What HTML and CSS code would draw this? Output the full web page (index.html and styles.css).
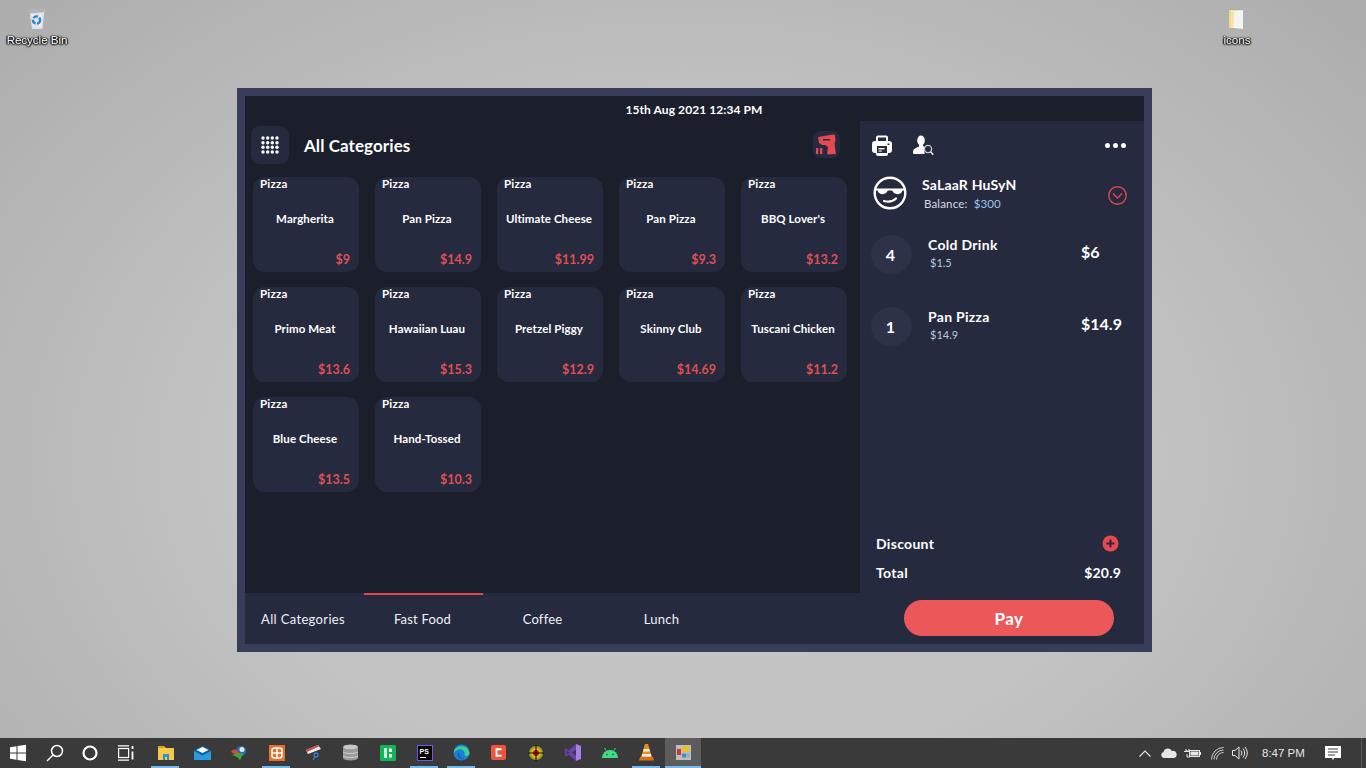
FILE: index.html
```html
<!DOCTYPE html>
<html lang="en">
<head>
<meta charset="utf-8">
<title>POS</title>
<link rel="stylesheet" href="styles.css">
</head>
<body>
<div class="screen">
  <main class="desktop">
    <div class="desk-icon recycle">
      <svg width="24" height="24" viewBox="0 0 24 24"><path d="M4.500 5l15-1.500-2 19.500H7z" fill="#dfe3e6"/><path d="M4.500 5l15-1.500 0 2.500-14.500 1.500z" fill="#aeb4b9"/><path d="M8 8l1 12M16 7.500l-1 13" stroke="#f2f4f5" stroke-width="1.500"/><circle cx="11.500" cy="14" r="3.600" fill="none" stroke="#2b86d8" stroke-width="2.400" stroke-dasharray="5 1.500"/></svg>
      <span>Recycle Bin</span>
    </div>
    <div class="desk-icon folder">
      <svg width="24" height="24" viewBox="0 0 24 24"><path d="M4 4h11v18H4z" fill="#f3d98a"/><path d="M9 5l9-1v19l-9-1z" fill="#f4f4f4"/><path d="M6 4h3v18H6z" fill="#f8e6a8"/></svg>
      <span>icons</span>
    </div>

    <section class="window">
      <header class="datebar">15th Aug 2021 12:34 PM</header>
      <div class="body">
        <div class="catalog">
          <div class="cat-head">
            <button class="grid-btn" aria-label="Menu">
              <svg width="18" height="18" viewBox="0 0 18 18" fill="#fff"><circle cx="2" cy="2" r="1.700"/><circle cx="6.700" cy="2" r="1.700"/><circle cx="11.300" cy="2" r="1.700"/><circle cx="16" cy="2" r="1.700"/><circle cx="2" cy="6.700" r="1.700"/><circle cx="6.700" cy="6.700" r="1.700"/><circle cx="11.300" cy="6.700" r="1.700"/><circle cx="16" cy="6.700" r="1.700"/><circle cx="2" cy="11.300" r="1.700"/><circle cx="6.700" cy="11.300" r="1.700"/><circle cx="11.300" cy="11.300" r="1.700"/><circle cx="16" cy="11.300" r="1.700"/><circle cx="2" cy="16" r="1.700"/><circle cx="6.700" cy="16" r="1.700"/><circle cx="11.300" cy="16" r="1.700"/><circle cx="16" cy="16" r="1.700"/></svg>
            </button>
            <h1 class="cat-title">All Categories</h1>
            <button class="scan-btn" aria-label="Scan">
              <svg width="27" height="27" viewBox="0 0 27 27" fill="#e64a50"><path d="M5 6l15-2.500 2 .5 .5 6-1 1.500 1 9 .5 2.500-8 .5-1-1 1-6-2.500-2.500H9L6 12z"/><path d="M10 8h7v1.500h-7z" fill="#262a3e"/><rect x="3" y="17" width="2.300" height="6"/><rect x="7" y="17" width="2.300" height="6"/></svg>
            </button>
          </div>
          <div class="cards">
            <article class="card"><span class="card-cat">Pizza</span><span class="card-name">Margherita</span><span class="card-price">$9</span></article>
            <article class="card"><span class="card-cat">Pizza</span><span class="card-name">Pan Pizza</span><span class="card-price">$14.9</span></article>
            <article class="card"><span class="card-cat">Pizza</span><span class="card-name">Ultimate Cheese</span><span class="card-price">$11.99</span></article>
            <article class="card"><span class="card-cat">Pizza</span><span class="card-name">Pan Pizza</span><span class="card-price">$9.3</span></article>
            <article class="card"><span class="card-cat">Pizza</span><span class="card-name">BBQ Lover's</span><span class="card-price">$13.2</span></article>
            <article class="card"><span class="card-cat">Pizza</span><span class="card-name">Primo Meat</span><span class="card-price">$13.6</span></article>
            <article class="card"><span class="card-cat">Pizza</span><span class="card-name">Hawaiian Luau</span><span class="card-price">$15.3</span></article>
            <article class="card"><span class="card-cat">Pizza</span><span class="card-name">Pretzel Piggy</span><span class="card-price">$12.9</span></article>
            <article class="card"><span class="card-cat">Pizza</span><span class="card-name">Skinny Club</span><span class="card-price">$14.69</span></article>
            <article class="card"><span class="card-cat">Pizza</span><span class="card-name">Tuscani Chicken</span><span class="card-price">$11.2</span></article>
            <article class="card"><span class="card-cat">Pizza</span><span class="card-name">Blue Cheese</span><span class="card-price">$13.5</span></article>
            <article class="card"><span class="card-cat">Pizza</span><span class="card-name">Hand-Tossed</span><span class="card-price">$10.3</span></article>
          </div>
        </div>

        <aside class="order">
          <div class="order-tools">
            <svg class="tool-print" width="20" height="21" viewBox="0 0 20 21"><path d="M4 2.500a2 2 0 0 1 2-2h8a2 2 0 0 1 2 2V6h-2V2.500H6V6H4z" fill="#fff"/><path d="M3 6h14a3 3 0 0 1 3 3v6a3 3 0 0 1-3 3h-1v1a2 2 0 0 1-2 2H6a2 2 0 0 1-2-2v-1H3a3 3 0 0 1-3-3V9a3 3 0 0 1 3-3z" fill="#fff"/><rect x="5" y="11" width="10" height="7" fill="#262a3e"/><rect x="6.500" y="13" width="6" height="1.400" fill="#fff"/><rect x="6.500" y="15.500" width="3.500" height="1" fill="#fff"/><rect x="15.500" y="8.500" width="2" height="1.500" fill="#262a3e"/></svg>
            <svg class="tool-user" width="21" height="21" viewBox="0 0 21 21"><ellipse cx="8" cy="5.500" rx="3.800" ry="5" fill="#fff"/><path d="M6 9h4v2l2.500 1.500a6 6 0 0 0-.5 6.500H1a1 1 0 0 1-1-1v-1.500c0-2 2-3.500 6-5z" fill="#fff"/><circle cx="15" cy="14" r="3.600" fill="none" stroke="#c9ccd4" stroke-width="1.300"/><path d="M17.500 16.700l2.800 3" stroke="#e6e8ee" stroke-width="1.500"/></svg>
            <span class="dots"><i></i><i></i><i></i></span>
          </div>
          <div class="customer">
            <svg class="face" width="34" height="34" viewBox="0 0 34 34" fill="none"><circle cx="17" cy="17" r="15.300" stroke="#fff" stroke-width="2.400"/><path d="M3 12.500h28v2h-1.500c-1 4-6 4.500-8.500 2.500-1-1-1.500-2-2-2.500h-4c-.5.5-1 1.500-2 2.500-2.500 2-7.500 1.500-8.500-2.500H3z" fill="#fff"/><path d="M11 25c4 1 9 .5 12-2.500" stroke="#fff" stroke-width="2.200" stroke-linecap="round"/></svg>
            <div class="cust-info">
              <div class="cust-name">SaLaaR HuSyN</div>
              <div class="cust-bal">Balance:&nbsp; <span class="bal-val">$300</span></div>
            </div>
            <svg class="chev" width="19" height="19" viewBox="0 0 19 19" fill="none" stroke="#e2474f" stroke-width="1.400"><circle cx="9.500" cy="9.500" r="8.700"/><path d="M5 7.500l4.500 4.500 4.500-4.500"/></svg>
          </div>
          <div class="lines">
            <div class="line">
              <span class="qty">4</span>
              <div class="line-info"><div class="line-name">Cold Drink</div><div class="line-unit">$1.5</div></div>
              <span class="line-total">$6</span>
            </div>
            <div class="line">
              <span class="qty">1</span>
              <div class="line-info"><div class="line-name">Pan Pizza</div><div class="line-unit">$14.9</div></div>
              <span class="line-total">$14.9</span>
            </div>
          </div>
          <div class="summary">
            <div class="sum-row"><span>Discount</span><svg class="sum-plus" width="17" height="17" viewBox="0 0 17 17"><circle cx="8.500" cy="8.500" r="8" fill="#e64a50"/><path d="M8.500 4.500v8M4.500 8.500h8" stroke="#262a3e" stroke-width="2"/></svg></div>
            <div class="sum-row"><span>Total</span><span class="sum-val">$20.9</span></div>
          </div>
        </aside>
      </div>
      <footer class="bottombar">
        <nav class="tabs">
          <a class="tab tab-first">All Categories</a>
          <a class="tab tab-active">Fast Food</a>
          <a class="tab">Coffee</a>
          <a class="tab">Lunch</a>
        </nav>
        <button class="pay">Pay</button>
      </footer>
    </section>
  </main>

  <footer class="taskbar">
    <div class="task-sys">
      <span class="t-sys"><svg width="18" height="18" viewBox="0 0 18 18" fill="#fff"><path d="M1 3.200l6.500-1v6.300H1zM8.500 2l8.500-1.300v7.800H8.500zM1 9.500h6.500v6.300l-6.500-1zM8.500 9.500H17v7.800L8.500 16z"/></svg></span>
      <span class="t-sys t-search"><svg width="18" height="18" viewBox="0 0 18 18" fill="none" stroke="#fff" stroke-width="1.500"><circle cx="11" cy="7" r="5.500"/><path d="M7 11l-6 6"/></svg></span>
      <span class="t-sys"><svg width="16" height="16" viewBox="0 0 16 16" fill="none" stroke="#fff" stroke-width="2.200"><circle cx="8" cy="8" r="6.500"/></svg></span>
      <span class="t-sys"><svg width="16" height="16" viewBox="0 0 16 16" fill="none" stroke="#fff" stroke-width="1.200"><rect x=".6" y="3.500" width="10" height="9"/><path d="M0 .8h11M0 15.200h11"/><path d="M14.500 1v3M14.500 6.500v8" stroke-width="1.800"/></svg></span>
    </div>
    <div class="task-apps">
      <span class="app on"><svg width="18" height="16" viewBox="0 0 18 16"><path d="M1 1h6l2 2h8v12H1z" fill="#f7c948"/><path d="M1 1h6l1 2H1z" fill="#d9a520"/><path d="M6 9h6v6h-2v-3H8v3H6z" fill="#2f8fdc"/></svg></span>
      <span class="app"><svg width="17" height="14" viewBox="0 0 17 14"><path d="M0 5l8.500-5L17 5v9H0z" fill="#2b9be0"/><path d="M0 5l8.500 4.500L17 5l-8.500-5z" fill="#0d5fa8"/><path d="M2.500 4l6-3 6 3-6 3z" fill="#fff"/></svg></span>
      <span class="app"><svg width="18" height="16" viewBox="0 0 18 16"><circle cx="10" cy="6" r="5" fill="#2e6bc0"/><circle cx="11" cy="4.500" r="2.500" fill="#dfe8ef"/><path d="M0 7c2-3 5-3 6-1l3 3-4 1z" fill="#d64a2a"/><path d="M1 10l6-2 5 1-3 6-3-3z" fill="#46a82f"/></svg></span>
      <span class="app on"><svg width="16" height="16" viewBox="0 0 16 16"><rect width="16" height="16" fill="#e8702a"/><rect x="3" y="3" width="10" height="10" rx="2.500" fill="none" stroke="#fff" stroke-width="1.600"/><path d="M3 8h10M8 3v10" stroke="#fff" stroke-width="1.400"/></svg></span>
      <span class="app"><svg width="17" height="17" viewBox="0 0 17 17"><path d="M1 6l12-5 3 4-13 5z" fill="#f1f1f1"/><path d="M1 6l12-5 .8 1.500L2 8z" fill="#d64545"/><circle cx="11" cy="11" r="2" fill="none" stroke="#3b7fd0" stroke-width="1.300"/><path d="M10 13l-2 3" stroke="#3b7fd0" stroke-width="1.300"/></svg></span>
      <span class="app"><svg width="15" height="17" viewBox="0 0 15 17"><path d="M0 3a7.500 2.600 0 0 1 15 0v11a7.500 2.600 0 0 1-15 0z" fill="#9a9a9a"/><ellipse cx="7.500" cy="3" rx="7" ry="2.300" fill="#c8c8c8"/><path d="M0 8c3 2 12 2 15 0M0 12c3 2 12 2 15 0" stroke="#d4d4d4" fill="none"/></svg></span>
      <span class="app"><svg width="16" height="16" viewBox="0 0 16 16"><rect width="16" height="16" rx="1.500" fill="#0fb75a"/><rect x="4" y="3" width="3" height="10" fill="#cdf3dc"/><rect x="9" y="3.500" width="3" height="3.500" fill="#fff"/><rect x="9" y="9" width="3" height="3.500" fill="#fff"/></svg></span>
      <span class="app on"><svg width="16" height="16" viewBox="0 0 16 16"><rect x=".5" y=".5" width="15" height="15" fill="#000" stroke="#6f56f0"/><text x="2.500" y="8.500" class="ps">PS</text><rect x="3" y="12" width="6" height="1" fill="#fff"/></svg></span>
      <span class="app on"><svg width="17" height="17" viewBox="0 0 17 17"><circle cx="8.500" cy="8.500" r="8" fill="#1c7fd6"/><path d="M1 7c2-6 14-7 15.500 2 .3 2.500-3 3.500-5 2.500C13 8 9.500 4.500 5.500 5.500 3.500 6 2 7 1 9z" fill="#3ccf9a"/><path d="M5.500 8c-2 4 2 9 8 6.500C9 16 5.500 13 5.500 8z" fill="#0d4c9a"/></svg></span>
      <span class="app"><svg width="15" height="15" viewBox="0 0 15 15"><rect width="15" height="15" rx="2" fill="#f0533f"/><path d="M10.500 4.200H5.500v6.600h5" fill="none" stroke="#fff" stroke-width="1.900"/></svg></span>
      <span class="app"><svg width="16" height="16" viewBox="0 0 16 16"><circle cx="8" cy="8" r="7" fill="#9aa82b"/><circle cx="8" cy="8" r="5" fill="#e8b31c"/><circle cx="8" cy="8" r="3" fill="#cf1313"/><path d="M8 0v16M0 8h16" stroke="#000" stroke-width=".9"/></svg></span>
      <span class="app"><svg width="16" height="17" viewBox="0 0 16 17"><path d="M11 0l5 2v13l-5 2z" fill="#a77fe6"/><path d="M11 0v17L3.500 10.500 1 12.500 0 12V5l1-.5 2.500 2z" fill="#6a3fb5"/><path d="M1.500 6.500v4L4 8.500zM11 5.500L7 8.500l4 3z" fill="#3c3c3c"/></svg></span>
      <span class="app"><svg width="16" height="11" viewBox="0 0 16 11"><path d="M0 11a8 8 0 0 1 16 0z" fill="#3ddc84"/><path d="M4 3.500L2.500 1M12 3.500L13.500 1" stroke="#3ddc84" stroke-width="1"/><circle cx="5" cy="7.500" r=".8" fill="#3a3a3a"/><circle cx="11" cy="7.500" r=".8" fill="#3a3a3a"/></svg></span>
      <span class="app on"><svg width="15" height="17" viewBox="0 0 15 17"><path d="M6 0h3l4 13H2z" fill="#f08a1c"/><path d="M4.700 5h5.600l.6 2.500H4z" fill="#f2f2f2"/><path d="M3.300 10h8.400l.7 2.500H2.600z" fill="#f2f2f2"/><path d="M1 13h13l1 3.500H0z" fill="#d86f10"/></svg></span>
      <span class="app active"><svg width="15" height="15" viewBox="0 0 15 15"><rect width="15" height="15" fill="#bdbdbd"/><rect x="1" y="4" width="4" height="6" fill="#c73a2e"/><rect x="6" y="1" width="7" height="6" fill="#e8c02f"/><rect x="6" y="8.500" width="4" height="4" fill="#4a8bd0"/><rect x="10.500" y="8.500" width="3" height="4" fill="#7fb2e0"/></svg></span>
    </div>
    <div class="tray">
      <svg class="tray-up" width="12" height="7" viewBox="0 0 12 7" fill="none" stroke="#e6e6e6" stroke-width="1.200"><path d="M.5 6.500L6 1l5.500 5.500"/></svg>
      <svg class="tray-cloud" width="16" height="10" viewBox="0 0 16 10" fill="#e6e6e6"><path d="M3 10a3 3 0 0 1-.5-5.900A4.500 4.500 0 0 1 11 3a3.500 3.500 0 0 1 2 7z"/></svg>
      <svg class="tray-bat" width="17" height="10" viewBox="0 0 17 10" fill="none" stroke="#e6e6e6"><path d="M2 1v2h3V1M0 3.500h6M3 6v3h3" stroke-width="1"/><rect x="5.500" y="2.500" width="10" height="6"/><rect x="6.500" y="3.500" width="8" height="4" fill="#e6e6e6" stroke="none"/><path d="M16.500 4v3"/></svg>
      <svg class="tray-wifi" width="13" height="13" viewBox="0 0 13 13" fill="none" stroke="#d0d0d0"><path d="M.5 12.500a12 12 0 0 1 12-12M3 12.500a9.500 9.500 0 0 1 9.500-9.500M5.500 12.500a7 7 0 0 1 7-7"/></svg>
      <svg class="tray-vol" width="16" height="14" viewBox="0 0 16 14" fill="none" stroke="#e6e6e6"><path d="M.5 4.500h2.500L7 1v12L3 9.500H.5z"/><path d="M9 4.500a4 4 0 0 1 0 5M11 2.500a7 7 0 0 1 0 9M13 1a9 9 0 0 1 0 12"/></svg>
      <span class="clock">8:47 PM</span>
      <svg class="tray-note" width="16" height="15" viewBox="0 0 16 15"><path d="M0 0h16v12H9l-1 2.500L7 12H0z" fill="#fff"/><path d="M3 3h10M3 6h10M3 9h7" stroke="#3a3a3a"/></svg>
      <span class="show-desk"></span>
    </div>
  </footer>
</div>
</body>
</html>
```
FILE: styles.css
```css
* { box-sizing: border-box; margin: 0; padding: 0; }
html, body { width: 1366px; height: 768px; overflow: hidden; }
body { font-family: "Lato", "Liberation Sans", sans-serif; color: #fff; }
button { border: 0; font: inherit; color: inherit; }
.screen { width: 1366px; height: 768px; display: flex; flex-direction: column; }

/* Desktop */
.desktop {
  position: relative; flex: 1;
  background: radial-gradient(ellipse 900px 640px at 50% 62%, #c6c6c6 0%, #c3c3c3 50%, #aeaeae 100%);
}
.desk-icon { position: absolute; width: 74px; top: 6px; display: flex; flex-direction: column; align-items: center; gap: 3px;
  font-family: "Liberation Sans", sans-serif; font-size: 11.500px; line-height: 14px; text-shadow: 0 0 2px #000, 0 1px 2px #000, 1px 0 1px #000, -1px 0 1px #000; }
.recycle { left: 0; }
.folder { left: 1200px; }

/* Window */
.window { position: absolute; left: 237px; top: 88px; width: 915px; height: 564px; border: 8px solid #393d5a;
  display: flex; flex-direction: column; background: #1b1e2b; }
.datebar { height: 25px; font-size: 12px; font-weight: 700; line-height: 27px; text-align: center; letter-spacing: .08px; flex: none; padding-right: 1px; }
.body { flex: 1; display: flex; min-height: 0; }

/* Catalog */
.catalog { flex: 1; min-width: 0; padding: 4px 0 0 6px; }
.cat-head { display: flex; align-items: center; height: 39px; padding-right: 20px; }
.grid-btn { width: 38px; height: 38px; border-radius: 9px; background: #262a3e; display: flex; align-items: center; justify-content: center; }
.cat-title { font-size: 17px; font-weight: 700; margin-left: 15px; flex: 1; letter-spacing: .08px; padding-top: 2px; }
.scan-btn { width: 27px; height: 27px; border-radius: 8px; background: #262a3e; display: flex; align-items: center; justify-content: center; }
.cards { display: grid; grid-template-columns: repeat(5, 106px); grid-auto-rows: 95px; gap: 15px 16px; margin: 13px 0 0 2px; }
.card { background: #262a3e; border-radius: 12px; display: flex; flex-direction: column; padding: 0 9px 0 7px; }
.card-cat { font-size: 11.500px; font-weight: 700; line-height: 14px; height: 15px; letter-spacing: .2px; }
.card-name { flex: 1; font-size: 11.500px; font-weight: 700; text-align: center; line-height: 14px; padding-top: 20px; letter-spacing: .1px; white-space: nowrap; }
.card-price { font-size: 12.500px; font-weight: 700; color: #df4f55; text-align: right; line-height: 15px; height: 20px; }

/* Order panel */
.order { width: 284px; flex: none; background: #262a3e; display: flex; flex-direction: column; padding: 0 17px 0 11px; }
.order-tools { display: flex; align-items: center; height: 46px; padding-top: 2px; padding-left: 1px; }
.tool-user { margin-left: 21px; }
.dots { margin-left: auto; display: flex; gap: 3px; margin-right: 1px; }
.dots i { width: 5px; height: 5px; border-radius: 50%; background: #fff; display: block; }
.customer { display: flex; align-items: center; height: 52px; margin-left: 2px; }
.cust-info { margin-left: 15px; flex: 1; }
.cust-name { font-size: 14px; font-weight: 700; line-height: 17px; letter-spacing: .2px; }
.cust-bal { font-size: 11.500px; line-height: 15px; margin: 3px 0 0 2px; color: #d6d9e4; letter-spacing: .15px; }
.bal-val { color: #9fc4ee; }
.chev { margin-top: 4px; }
.lines { margin-top: 16px; flex: 1; display: flex; flex-direction: column; gap: 30px; }
.line { display: flex; align-items: flex-start; height: 42px; }
.qty { width: 41px; height: 39px; border-radius: 50%; background: #2e3248; flex: none; font-size: 16px; font-weight: 700; text-align: center; line-height: 39px; padding-right: 2px; }
.line-info { margin-left: 16px; width: 153px; flex: none; }
.line-name { font-size: 14px; font-weight: 700; line-height: 17px; letter-spacing: .3px; margin-top: 1px; }
.line-unit { font-size: 11px; line-height: 14px; color: #b7c8de; margin: 3px 0 0 2px; }
.line-total { font-size: 16px; font-weight: 700; line-height: 20px; margin-top: 7px; white-space: nowrap; }
.summary { padding: 0 0 0 5px; margin-bottom: 6px; margin-right: 7px; }
.sum-row { display: flex; align-items: center; justify-content: space-between; height: 29px; font-size: 14px; font-weight: 700; letter-spacing: .3px; }
.sum-plus { margin-right: 1px; }
.sum-val { margin-right: -1px; letter-spacing: .2px; }

/* Bottom */
.bottombar { height: 51px; flex: none; background: #262a3e; display: flex; }
.tabs { display: flex; width: 615px; flex: none; }
.tab { width: 119px; font-size: 13px; line-height: 49px; border-top: 2px solid transparent; text-align: center; color: #eef0f6; letter-spacing: .2px; }
.tab-first { text-align: left; padding-left: 16px; letter-spacing: .35px; white-space: nowrap; }
.tab-active { border-top-color: #e2474f; padding-right: 2px; }
.pay { width: 210px; height: 36px; margin: 7px 0 0 44px; border-radius: 18px; background: #ec5759; font-size: 17px; font-weight: 700; letter-spacing: .4px; }

/* Taskbar */
.taskbar { height: 30px; flex: none; background: #3a3a3a; display: flex; align-items: stretch; font-family: "Liberation Sans", sans-serif; }
.task-sys { display: flex; width: 147px; flex: none; }
.t-sys { width: 36px; display: flex; align-items: center; justify-content: center; }
.t-search { padding-left: 2px; }
.task-apps { display: flex; }
.app { width: 37px; display: flex; align-items: center; justify-content: center; position: relative; padding-bottom: 1px; }
.app.on::after, .app.active::after { content: ""; position: absolute; left: 4px; right: 5px; bottom: 0; height: 2px; background: #76b9ed; }
.app.active { background: #5c5c5c; width: 36px; }
.app.active::after { left: 0; right: 0; }
.ps { font-family: "Liberation Sans", sans-serif; font-size: 7px; font-weight: 700; fill: #fff; }
.tray { margin-left: auto; display: flex; align-items: center; color: #e6e6e6; font-size: 11.500px; }
.tray-cloud { margin-left: 10px; }
.tray-bat { margin-left: 7.500px; }
.tray-wifi { margin-left: 10px; }
.tray-vol { margin-left: 8px; }
.clock { margin-left: 14px; width: 42px; white-space: nowrap; }
.tray-note { margin-left: 21px; }
.show-desk { width: 1px; height: 30px; background: #5a5a5a; margin-left: 20px; margin-right: 4px; }
```
